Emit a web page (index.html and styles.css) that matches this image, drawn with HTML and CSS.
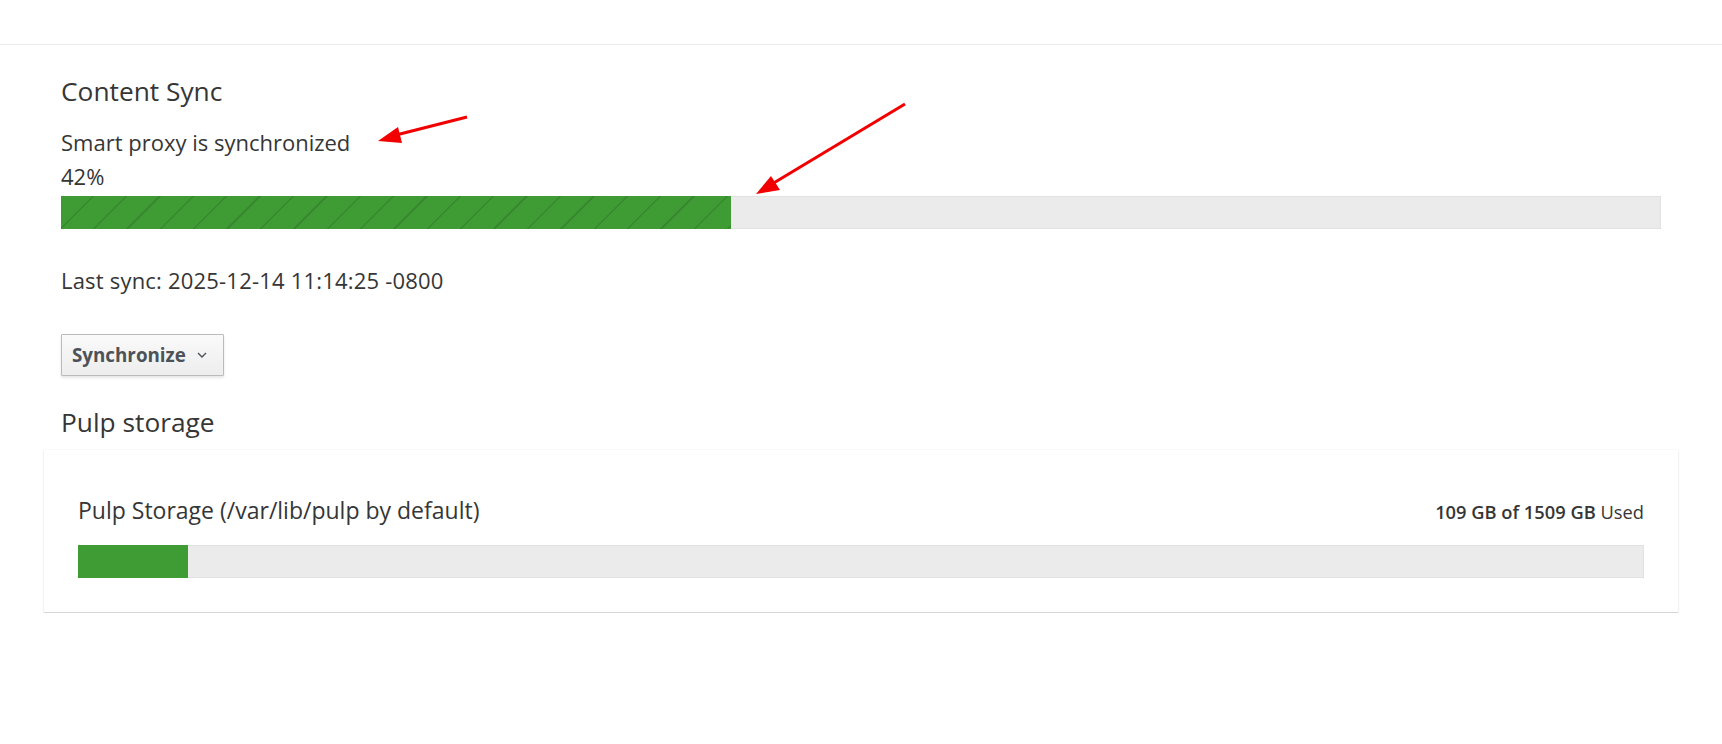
FILE: index.html
```html
<!DOCTYPE html>
<html lang="en">
<head>
  <meta charset="UTF-8">
  <title>Smart Proxy - Content</title>
  <link rel="stylesheet" href="styles.css">
</head>
<body>
  <div class="topbar"></div>

  <div class="content">
    <h2 class="section-title">Content Sync</h2>
    <p class="sync-status">Smart proxy is synchronized</p>
    <div class="sync-pct">42%</div>
    <div class="progress">
      <div class="progress-bar striped" style="width: 41.9%"></div>
    </div>
    <p class="last-sync">Last sync: 2025-12-14 11:14:25 -0800</p>

    <button class="btn-default" type="button">
      Synchronize
      <svg class="caret" width="10" height="6" viewBox="0 0 10 6"><path d="M1 1 L5 5 L9 1" fill="none" stroke="#4d5258" stroke-width="1.4"/></svg>
    </button>

    <h2 class="section-title storage-title">Pulp storage</h2>
    <div class="card">
      <div class="card-head">
        <span class="card-label">Pulp Storage (/var/lib/pulp by default)</span>
        <span class="usage"><b>109 GB of 1509 GB</b> Used</span>
      </div>
      <div class="progress">
        <div class="progress-bar" style="width: 7%"></div>
      </div>
    </div>
  </div>

  <!-- annotation arrows drawn on top of the screenshot -->
  <svg class="annotations" width="1722" height="744" viewBox="0 0 1722 744">
    <line x1="467" y1="117" x2="396" y2="135" stroke="#f20000" stroke-width="3"/>
    <polygon points="378,141 398,127 402,143" fill="#f20000"/>
    <line x1="905" y1="104" x2="772" y2="184" stroke="#f20000" stroke-width="3"/>
    <polygon points="756,194 771,176 780,190" fill="#f20000"/>
  </svg>
</body>
</html>
```

FILE: styles.css
```css
html, body {
  margin: 0; padding: 0;
  background: #fff;
  color: #363636;
  font-family: "Open Sans", "Noto Sans", sans-serif;
}

.topbar {
  height: 44px;
  border-bottom: 1px solid #ebebeb;
}

.content {
  padding: 0 61px;
}

/* Headings */
.section-title {
  font-size: 26.3px; font-weight: 400;
  line-height: 31px;
  margin: 31px 0 0;
}
.storage-title { margin-top: 31px; }

.sync-status, .sync-pct, .last-sync {
  font-size: 22px; line-height: 28px;
  margin: 0;
}
.sync-status { margin-top: 21px; }
.sync-pct    { margin-top: 6px; }
.last-sync   { margin-top: 37px; letter-spacing: 0.2px; }

/* Progress bars */
.progress {
  height: 33px;
  background: #ebebeb;
  box-shadow: inset 0 0 1px rgba(3,3,3,0.35);
}
.sync-pct + .progress { margin-top: 6px; }
.progress-bar {
  height: 100%;
  background-color: #3f9c35;
}
.progress-bar.striped {
  background-image: repeating-linear-gradient(135deg, transparent 0 22px, rgba(0,0,0,0.13) 22px 23.6px);
}

/* Button */
.btn-default {
  margin-top: 40px;
  height: 42px;
  padding: 0 16px 0 10px;
  display: flex; align-items: center; gap: 11px;
  background: #f1f1f1 linear-gradient(to bottom, #fafafa 0, #ededed 100%);
  border: 1px solid #bbb; border-radius: 1px;
  box-shadow: 0 2px 3px rgba(3,3,3,0.1);
  color: #4d5258;
  font-family: inherit; font-size: 18.8px; font-weight: 700;
}

/* Card */
.card {
  margin: 12px -17px 0;
  padding: 46px 34px 34px;
  background: #fff;
  border-bottom: 1px solid #d6d6d6;
  box-shadow: 0 1px 2px rgba(3,3,3,0.12), 0 0 1px rgba(3,3,3,0.1);
}
.card-head {
  display: flex; justify-content: space-between; align-items: baseline;
  margin-bottom: 21px;
}
.card-label { font-size: 23px; line-height: 28px; }
.usage { font-size: 18.3px; }
.usage b { font-weight: 600; }

.annotations {
  position: absolute; left: 0; top: 0;
  pointer-events: none;
}
```
